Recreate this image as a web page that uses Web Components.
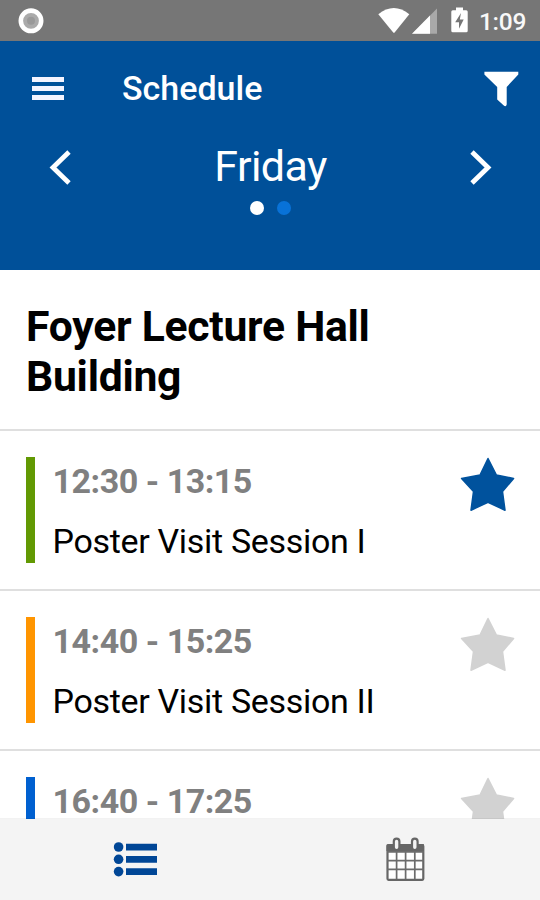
<!DOCTYPE html>
<html lang="en">
<head>
<meta charset="utf-8">
<title>Schedule</title>
<style>
html, body { margin: 0; height: 100%; overflow: hidden; }
body { font-family: Roboto, "Liberation Sans", sans-serif; background: #fff; }
</style>
</head>
<body>
<schedule-app></schedule-app>
<script>
const define = (name, html) => {
  const template = document.createElement('template');
  template.innerHTML = html;
  customElements.define(name, class extends HTMLElement {
    constructor() {
      super();
      this.attachShadow({ mode: 'open' }).append(template.content.cloneNode(true));
    }
  });
};

define('status-bar', `
<style>
:host { display: flex; align-items: center; height: 41px; box-sizing: border-box; padding: 0 14px 0 18px; background: #767676; color: #fff; }
svg { display: block; }
.spacer { flex: 1; }
.time { font-size: 24.5px; font-weight: 500; line-height: 41px; width: 47px; white-space: nowrap; padding-top: 2px; letter-spacing: -0.3px; color: #f8f8f8; }
</style>
<svg width="26" height="41" viewBox="0 0 26 41"><circle cx="13" cy="20.8" r="10.2" fill="#aaa" stroke="#fff" stroke-width="4.6"/><circle cx="13" cy="20.8" r="4" fill="#999"/></svg>
<div class="spacer"></div>
<svg width="101" height="41" viewBox="378 0 101 41">
  <path d="M378.3 14.2Q393.8 1.8 409.3 14.2L394.8 32.2Q393.9 33.2 393 32.2Z" fill="#fff"/>
  <path d="M437 8.5V33.8H412Z" fill="#a9a9a9"/>
  <path d="M430 15.6V33.8H412Z" fill="#fff"/>
  <path d="M456 7.5h7v2.7h3.2q1.5 0 1.5 1.5v19q0 1.5-1.5 1.5h-13.4q-1.5 0-1.5-1.5v-19q0-1.5 1.5-1.5h3.2z" fill="#fff"/>
  <path d="M461 13l-5.8 9.2h3.8v6.5l4.7-9.2h-3.9z" fill="#767676"/>
</svg>
<div class="time">1:09</div>`);

define('app-header', `
<style>
:host { display: block; height: 229px; background: #005099; color: #fff; }
.bar { display: grid; grid-template-columns: 122px 1fr auto; align-items: center; height: 95px; padding-right: 20px; }
.menu { display: grid; gap: 4.3px; width: 32px; margin-left: 32px; }
.menu i { height: 4.7px; background: #f4f4ff; }
h1 { margin: 0; font-size: 34px; font-weight: 500; line-height: 40px; padding-bottom: 1px; }
.day { display: grid; grid-template-columns: 120px 1fr 120px; align-items: center; height: 60px; justify-items: center; }
.day span { font-size: 43px; line-height: 50px; letter-spacing: -0.6px; padding-left: 1px; padding-bottom: 1px; }
.dots { display: flex; justify-content: center; gap: 13px; padding-top: 5px; }
.dots i { width: 14px; height: 14px; border-radius: 50%; background: #fff; }
.dots i + i { background: #0872d8; }
svg { display: block; }
</style>
<div class="bar">
  <div class="menu"><i></i><i></i><i></i></div>
  <h1><slot name="title"></slot></h1>
  <svg width="36" height="36" viewBox="484 71 36 36"><path d="M484.4 71.8H518.3V74.5L506.7 87V104.5Q506 107.5 503.5 105.3L497.2 99.6V87L484.4 74.6Z" fill="#fff"/></svg>
</div>
<div class="day">
  <svg width="24" height="40" viewBox="48 146 24 40"><path d="M69 152L53 167.5L69 183" fill="none" stroke="#fff" stroke-width="4.8"/></svg>
  <span><slot name="day"></slot></span>
  <svg width="24" height="40" viewBox="468 146 24 40"><path d="M472 152L488 167.5L472 183" fill="none" stroke="#fff" stroke-width="4.8"/></svg>
</div>
<div class="dots"><i></i><i></i></div>`);

define('location-heading', `
<style>
:host { display: block; height: 161px; box-sizing: border-box; padding: 32px 100px 0 26px; border-bottom: 2px solid #dfdfdf; }
h2 { margin: 0; font-size: 42.7px; line-height: 49.5px; font-weight: 700; letter-spacing: -0.27px; color: #000; }
</style>
<h2><slot></slot></h2>`);

define('session-row', `
<style>
:host { display: flex; height: 160px; box-sizing: border-box; padding: 26px 25px 26px 26px; border-bottom: 2px solid #dfdfdf; }
.bar { width: 9px; height: 106px; background: var(--track); flex: none; }
.text { flex: 1; padding-left: 17.5px; white-space: nowrap; }
.time { font-size: 34px; line-height: 40px; font-weight: 700; letter-spacing: -0.47px; color: #808080; padding-top: 4px; }
.name { font-size: 34px; line-height: 40px; letter-spacing: -0.32px; color: #000; padding-top: 20px; }
svg { display: block; flex: none; }
</style>
<div class="bar"></div>
<div class="text">
  <div class="time"><slot name="time"></slot></div>
  <div class="name"><slot></slot></div>
</div>
<svg width="56" height="56" viewBox="459 457 56 56"><path d="M488 458.5L496.4 475L513.6 478.4L502.5 491.5L505 510.2L488 502.3L471 510.2L473.5 491.5L461.6 478.4L480 475Z" fill="var(--star, #d2d2d2)" stroke="var(--star, #d2d2d2)" stroke-width="1.5" stroke-linejoin="round"/></svg>`);

define('tab-bar', `
<style>
:host { display: grid; grid-template-columns: 1fr 1fr; justify-items: center; height: 81px; flex: none; background: #f4f4f4; box-shadow: 0 -1px rgba(0,0,0,.05); position: relative; }
svg { display: block; }
</style>
<svg width="50" height="81" viewBox="110 819 50 81" fill="#004696">
  <circle cx="118.6" cy="847" r="4.8"/><circle cx="118.6" cy="859.3" r="4.8"/><circle cx="118.6" cy="871.6" r="4.8"/>
  <path d="M126 843.7h31v6.7h-31zM126 856h31v6.7h-31zM126 868.2h31v6.7h-31z"/>
</svg>
<svg width="50" height="81" viewBox="380 819 50 81">
  <path d="M387.5 844.5H423V879.5H387.5Z" fill="#fff"/>
  <path d="M386.5 851V845.5Q386.5 844.3 387.7 844.3H424V851Z" fill="#666"/>
  <rect x="387.5" y="845.2" width="35.8" height="34.6" rx="1" fill="none" stroke="#666" stroke-width="2.2"/>
  <path d="M387 851.8H424M387 860.6H424M387 869.4H424M396.6 851V879M405.6 851V879M414.8 851V879" stroke="#6c6c6c" stroke-width="1.7"/>
  <rect x="393.8" y="838.6" width="5.6" height="11.4" rx="2.8" fill="#f4f4f4" stroke="#666" stroke-width="2.2"/>
  <rect x="412" y="838.6" width="5.6" height="11.4" rx="2.8" fill="#f4f4f4" stroke="#666" stroke-width="2.2"/>
</svg>`);

define('schedule-app', `
<style>
:host { display: flex; flex-direction: column; height: 100vh; }
status-bar, app-header { flex: none; }
main { flex: 1; min-height: 0; overflow: hidden; }
</style>
<status-bar></status-bar>
<app-header><span slot="title">Schedule</span><span slot="day">Friday</span></app-header>
<main>
  <location-heading>Foyer Lecture Hall Building</location-heading>
  <session-row style="--track:#629903;--star:#00529d"><span slot="time">12:30 - 13:15</span>Poster Visit Session I</session-row>
  <session-row style="--track:#ff9500"><span slot="time">14:40 - 15:25</span>Poster Visit Session II</session-row>
  <session-row style="--track:#0060d0"><span slot="time">16:40 - 17:25</span></session-row>
</main>
<tab-bar></tab-bar>`);
</script>
</body>
</html>
